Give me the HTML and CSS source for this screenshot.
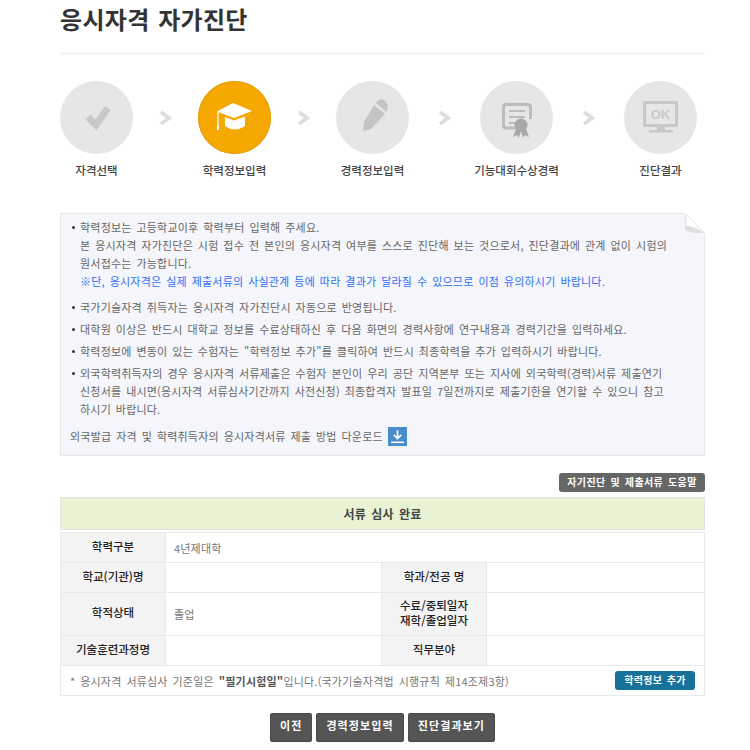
FILE: index.html
```html
<!DOCTYPE html>
<html lang="ko">
<head>
<meta charset="utf-8">
<title>응시자격 자가진단</title>
<link rel="stylesheet" href="styles.css">
</head>
<body>
<main class="page">
  <h1 class="title">응시자격 자가진단</h1>
  <ol class="steps">
    <li class="step">
      <span class="circle"><svg class="ico" viewBox="0 0 73 73"><polyline points="28,36 36,44 48,27" fill="none" stroke="#c8c8c8" stroke-width="7"/></svg></span>
      <span class="step-label">자격선택</span>
    </li>
    <li class="chev"><svg class="chev-ico" viewBox="0 0 13 16"><polyline points="2,2 10,8 2,14" fill="none" stroke="#dedede" stroke-width="4"/></svg></li>
    <li class="step">
      <span class="circle circle-on"><svg class="ico" viewBox="0 0 73 73"><path d="M35 22 L54 30 L36 37 L19 30.500 Z" fill="#fff"/><path d="M27 36 L36 39.500 L47 35.500 V45 Q37 52 27 45 Z" fill="#fff"/><path d="M20 31 V46" stroke="#fff" stroke-width="1.200"/><rect x="19" y="44" width="2" height="5" fill="#fff"/></svg></span>
      <span class="step-label">학력정보입력</span>
    </li>
    <li class="chev"><svg class="chev-ico" viewBox="0 0 13 16"><polyline points="2,2 10,8 2,14" fill="none" stroke="#dedede" stroke-width="4"/></svg></li>
    <li class="step">
      <span class="circle"><svg class="ico" viewBox="0 0 73 73"><path d="M38 24 L49 33 L35 48 L27 50 L28 41 Z" fill="#c4c4c4"/><path d="M40 22 L43 19 Q47 17 50 21 Q53 25 51 29 L50 31 Z" fill="#c4c4c4"/></svg></span>
      <span class="step-label">경력정보입력</span>
    </li>
    <li class="chev chev-wide"><svg class="chev-ico" viewBox="0 0 13 16"><polyline points="2,2 10,8 2,14" fill="none" stroke="#dedede" stroke-width="4"/></svg></li>
    <li class="step">
      <span class="circle"><svg class="ico" viewBox="0 0 73 73"><path d="M36 47 H26 Q23.500 47 23.500 44 V26 Q23.500 23.500 26 23.500 H48 Q50.500 23.500 50.500 26 V38" fill="none" stroke="#bcbcbc" stroke-width="3"/><path d="M29 30 H45 M29 36 H45 M29 42 H36" stroke="#bcbcbc" stroke-width="2"/><path d="M36 48 L33 56 L37 54 L39 57 L41 50 L43 57 L45 54 L49 56 L46 48 Z" fill="#a8a8a8"/><circle cx="41" cy="44" r="6.500" fill="#a8a8a8"/></svg></span>
      <span class="step-label">기능대회수상경력</span>
    </li>
    <li class="chev chev-wide"><svg class="chev-ico" viewBox="0 0 13 16"><polyline points="2,2 10,8 2,14" fill="none" stroke="#dedede" stroke-width="4"/></svg></li>
    <li class="step">
      <span class="circle"><svg class="ico" viewBox="0 0 73 73"><rect x="20.500" y="21.500" width="32" height="23" fill="none" stroke="#c8c8c8" stroke-width="3"/><text x="36.500" y="38" class="ok">OK</text><rect x="33" y="46" width="8" height="4" fill="#c8c8c8"/><rect x="25" y="49" width="24" height="2.500" fill="#c8c8c8"/></svg></span>
      <span class="step-label">진단결과</span>
    </li>
  </ol>

  <section class="notice">
    <svg class="fold" viewBox="0 0 21 21"><path d="M0 0 H21 V21 Z" fill="#fff"/><path d="M2 1 L20 19 Q8 20 1 14 Q3 8 2 1 Z" fill="#fff"/><path d="M1.500 1 Q3.500 9 2 13 Q8 12 20 19.500 Q8 21 1 17 Z" fill="#dcdedf"/><path d="M1.500 1 L20 19.500" stroke="#e4e4e6" fill="none"/></svg>
    <ul class="notice-list">
      <li class="notice-item notice-first">학력정보는 고등학교이후 학력부터 입력해 주세요.<br>본 응시자격 자가진단은 시험 접수 전 본인의 응시자격 여부를 스스로 진단해 보는 것으로서, 진단결과에 관계 없이 시험의<br>원서접수는 가능합니다.<br><span class="blue">※단, 응시자격은 실제 제출서류의 사실관계 등에 따라 결과가 달라질 수 있으므로 이점 유의하시기 바랍니다.</span></li>
      <li class="notice-item">국가기술자격 취득자는 응시자격 자가진단시 자동으로 반영됩니다.</li>
      <li class="notice-item">대학원 이상은 반드시 대학교 정보를 수료상태하신 후 다음 화면의 경력사항에 연구내용과 경력기간을 입력하세요.</li>
      <li class="notice-item">학력정보에 변동이 있는 수험자는 "학력정보 추가"를 클릭하여 반드시 최종학력을 추가 입력하시기 바랍니다.</li>
      <li class="notice-item">외국학력취득자의 경우 응시자격 서류제출은 수험자 본인이 우리 공단 지역본부 또는 지사에 외국학력(경력)서류 제출연기<br>신청서를 내시면(응시자격 서류심사기간까지 사전신청) 최종합격자 발표일 7일전까지로 제출기한을 연기할 수 있으니 참고<br>하시기 바랍니다.</li>
    </ul>
    <p class="download">외국발급 자격 및 학력취득자의 응시자격서류 제출 방법 다운로드
      <span class="dl-btn"><svg class="dl-ico" viewBox="0 0 18 18"><path d="M9 3 V10 M5.500 7.500 L9 11 L12.500 7.500" fill="none" stroke="#fff" stroke-width="1.600"/><path d="M3 14.500 H15" stroke="#fff" stroke-width="1.500"/></svg></span>
    </p>
  </section>

  <div class="help-row"><a class="btn-help">자기진단 및 제출서류 도움말</a></div>
  <div class="status">서류 심사 완료</div>

  <table class="info">
    <colgroup><col class="c-th"><col class="c-td"><col class="c-th"><col></colgroup>
    <tr class="r30">
      <th>학력구분</th>
      <td colspan="3">4년제대학</td>
    </tr>
    <tr class="r30">
      <th>학교(기관)명</th>
      <td></td>
      <th>학과/전공 명</th>
      <td></td>
    </tr>
    <tr class="r43">
      <th>학적상태</th>
      <td>졸업</td>
      <th>수료/중퇴일자<br>재학/졸업일자</th>
      <td></td>
    </tr>
    <tr class="r30">
      <th>기술훈련과정명</th>
      <td></td>
      <th>직무분야</th>
      <td></td>
    </tr>
    <tr class="r30">
      <td colspan="4" class="foot">
        <div class="foot-row">
          <span>* 응시자격 서류심사 기준일은 <b class="foot-strong">"필기시험일"</b>입니다.(국가기술자격법 시행규칙 제14조제3항)</span>
          <a class="btn-add">학력정보 추가</a>
        </div>
      </td>
    </tr>
  </table>

  <div class="actions">
    <a class="btn-dark">이전</a>
    <a class="btn-dark">경력정보입력</a>
    <a class="btn-dark">진단결과보기</a>
  </div>
</main>
</body>
</html>
```
FILE: styles.css
```css
* { box-sizing: border-box; }
html, body { margin: 0; padding: 0; background: #fff; }
body {
  font-family: "Noto Sans CJK KR", "Noto Sans", sans-serif;
  font-size: 11px;
  letter-spacing: 0.2px;
  word-spacing: 1.6px;
  color: #666;
  overflow: hidden;
  height: 750px;
}
.page { width: 645px; margin-left: 60px; }
.title {
  margin: 0;
  height: 54px;
  padding-top: 3px;
  font-size: 24px;
  line-height: 32px;
  font-weight: 700;
  color: #333;
  letter-spacing: 0.3px;
  border-bottom: 1px solid #eee;
}
.steps {
  list-style: none;
  margin: 27px 0 0;
  padding: 0;
  display: flex;
  align-items: flex-start;
  height: 132px;
  letter-spacing: 0;
}
.step { width: 73px; display: flex; flex-direction: column; align-items: center; }
.circle {
  width: 73px;
  height: 73px;
  border-radius: 50%;
  background: #e6e6e6;
  display: block;
}
.circle-on { background: #f5a800; box-shadow: inset 0 0 0 1px #e59f0a; }
.ico { width: 73px; height: 73px; display: block; }
.step-label {
  margin-top: 8px;
  white-space: nowrap;
  font-size: 11.5px;
  line-height: 17px;
  font-weight: 500;
  color: #444;
}
.chev { width: 65px; height: 73px; display: flex; align-items: center; justify-content: center; }
.chev-wide { width: 71px; }
.chev-ico { width: 13px; height: 16px; display: block; }
.ok { font-family: "Liberation Sans", sans-serif; font-weight: 700; font-size: 13px; fill: #c8c8c8; text-anchor: middle; }

.notice {
  position: relative;
  height: 243px;
  background: #f5f6fb;
  border: 1px solid #e8e8ea;
  padding: 4px 30px 0 11px;
}
.fold { position: absolute; top: -1px; right: -1px; width: 21px; height: 21px; }
.notice-list { list-style: none; margin: 0; padding: 0; }
.notice-item {
  position: relative;
  padding-left: 8px;
  margin-bottom: 4px;
  line-height: 18px;
  white-space: nowrap;
}
.notice-first { margin-bottom: 8px; }
.notice-item::before {
  content: "";
  position: absolute;
  left: 0;
  top: 8px;
  width: 3px;
  height: 3px;
  border-radius: 50%;
  background: #333;
}
.blue { color: #2f6ff5; }
.download { margin: 9px 0 0 -2px; line-height: 19px; display: flex; align-items: center; gap: 5px; white-space: nowrap; }
.dl-btn { width: 19px; height: 19px; background: #4a8ccb; display: block; }
.dl-ico { width: 19px; height: 19px; display: block; }

.help-row { display: flex; justify-content: flex-end; margin-top: 17px; }
.btn-help {
  height: 19px;
  width: 146px;
  background: #666;
  color: #fff;
  border-radius: 3px;
  font-size: 10px;
  line-height: 17px;
  font-weight: 700;
  letter-spacing: 0.4px;
  text-align: center;
}
.status {
  margin-top: 5px;
  height: 33px;
  background: #e7f3d2;
  border: 1px solid #e2e6da;
  color: #444;
  font-weight: 700;
  font-size: 12px;
  line-height: 31px;
  text-align: center;
}
.info {
  margin-top: 2px;
  width: 645px;
  table-layout: fixed;
  border-collapse: collapse;
  border: 1px solid #e4e4e4;
}
.c-th { width: 105px; }
.c-td { width: 216px; }
.r30 { height: 30px; }
.r43 { height: 43px; }
.info th, .info td { border: 1px solid #e9e9e9; padding: 0; }
.info th {
  background: #f3f3f3;
  color: #222;
  font-size: 11.5px;
  line-height: 15px;
  font-weight: 500;
  letter-spacing: 0;
  word-spacing: 0;
  text-align: center;
  padding-bottom: 3px;
}
.info td { padding-left: 8px; color: #777; }
.info td.foot { padding: 0 9px 0 9px; }
.foot-row { display: flex; justify-content: space-between; align-items: center; }
.foot-strong { color: #555; }
.btn-add {
  width: 80px;
  height: 19px;
  background: #17729b;
  color: #fff;
  border-radius: 3px;
  font-size: 10px;
  line-height: 17px;
  font-weight: 700;
  letter-spacing: 0.3px;
  text-align: center;
}
.actions { display: flex; justify-content: center; gap: 4px; margin-top: 17px; }
.btn-dark {
  height: 29px;
  padding: 0 10px;
  background: #555;
  color: #fff;
  border-radius: 3px;
  font-size: 11px;
  font-weight: 700;
  line-height: 25px;
  letter-spacing: 1.1px;
  box-shadow: inset 0 0 0 1px #4a4a4a;
}
```
